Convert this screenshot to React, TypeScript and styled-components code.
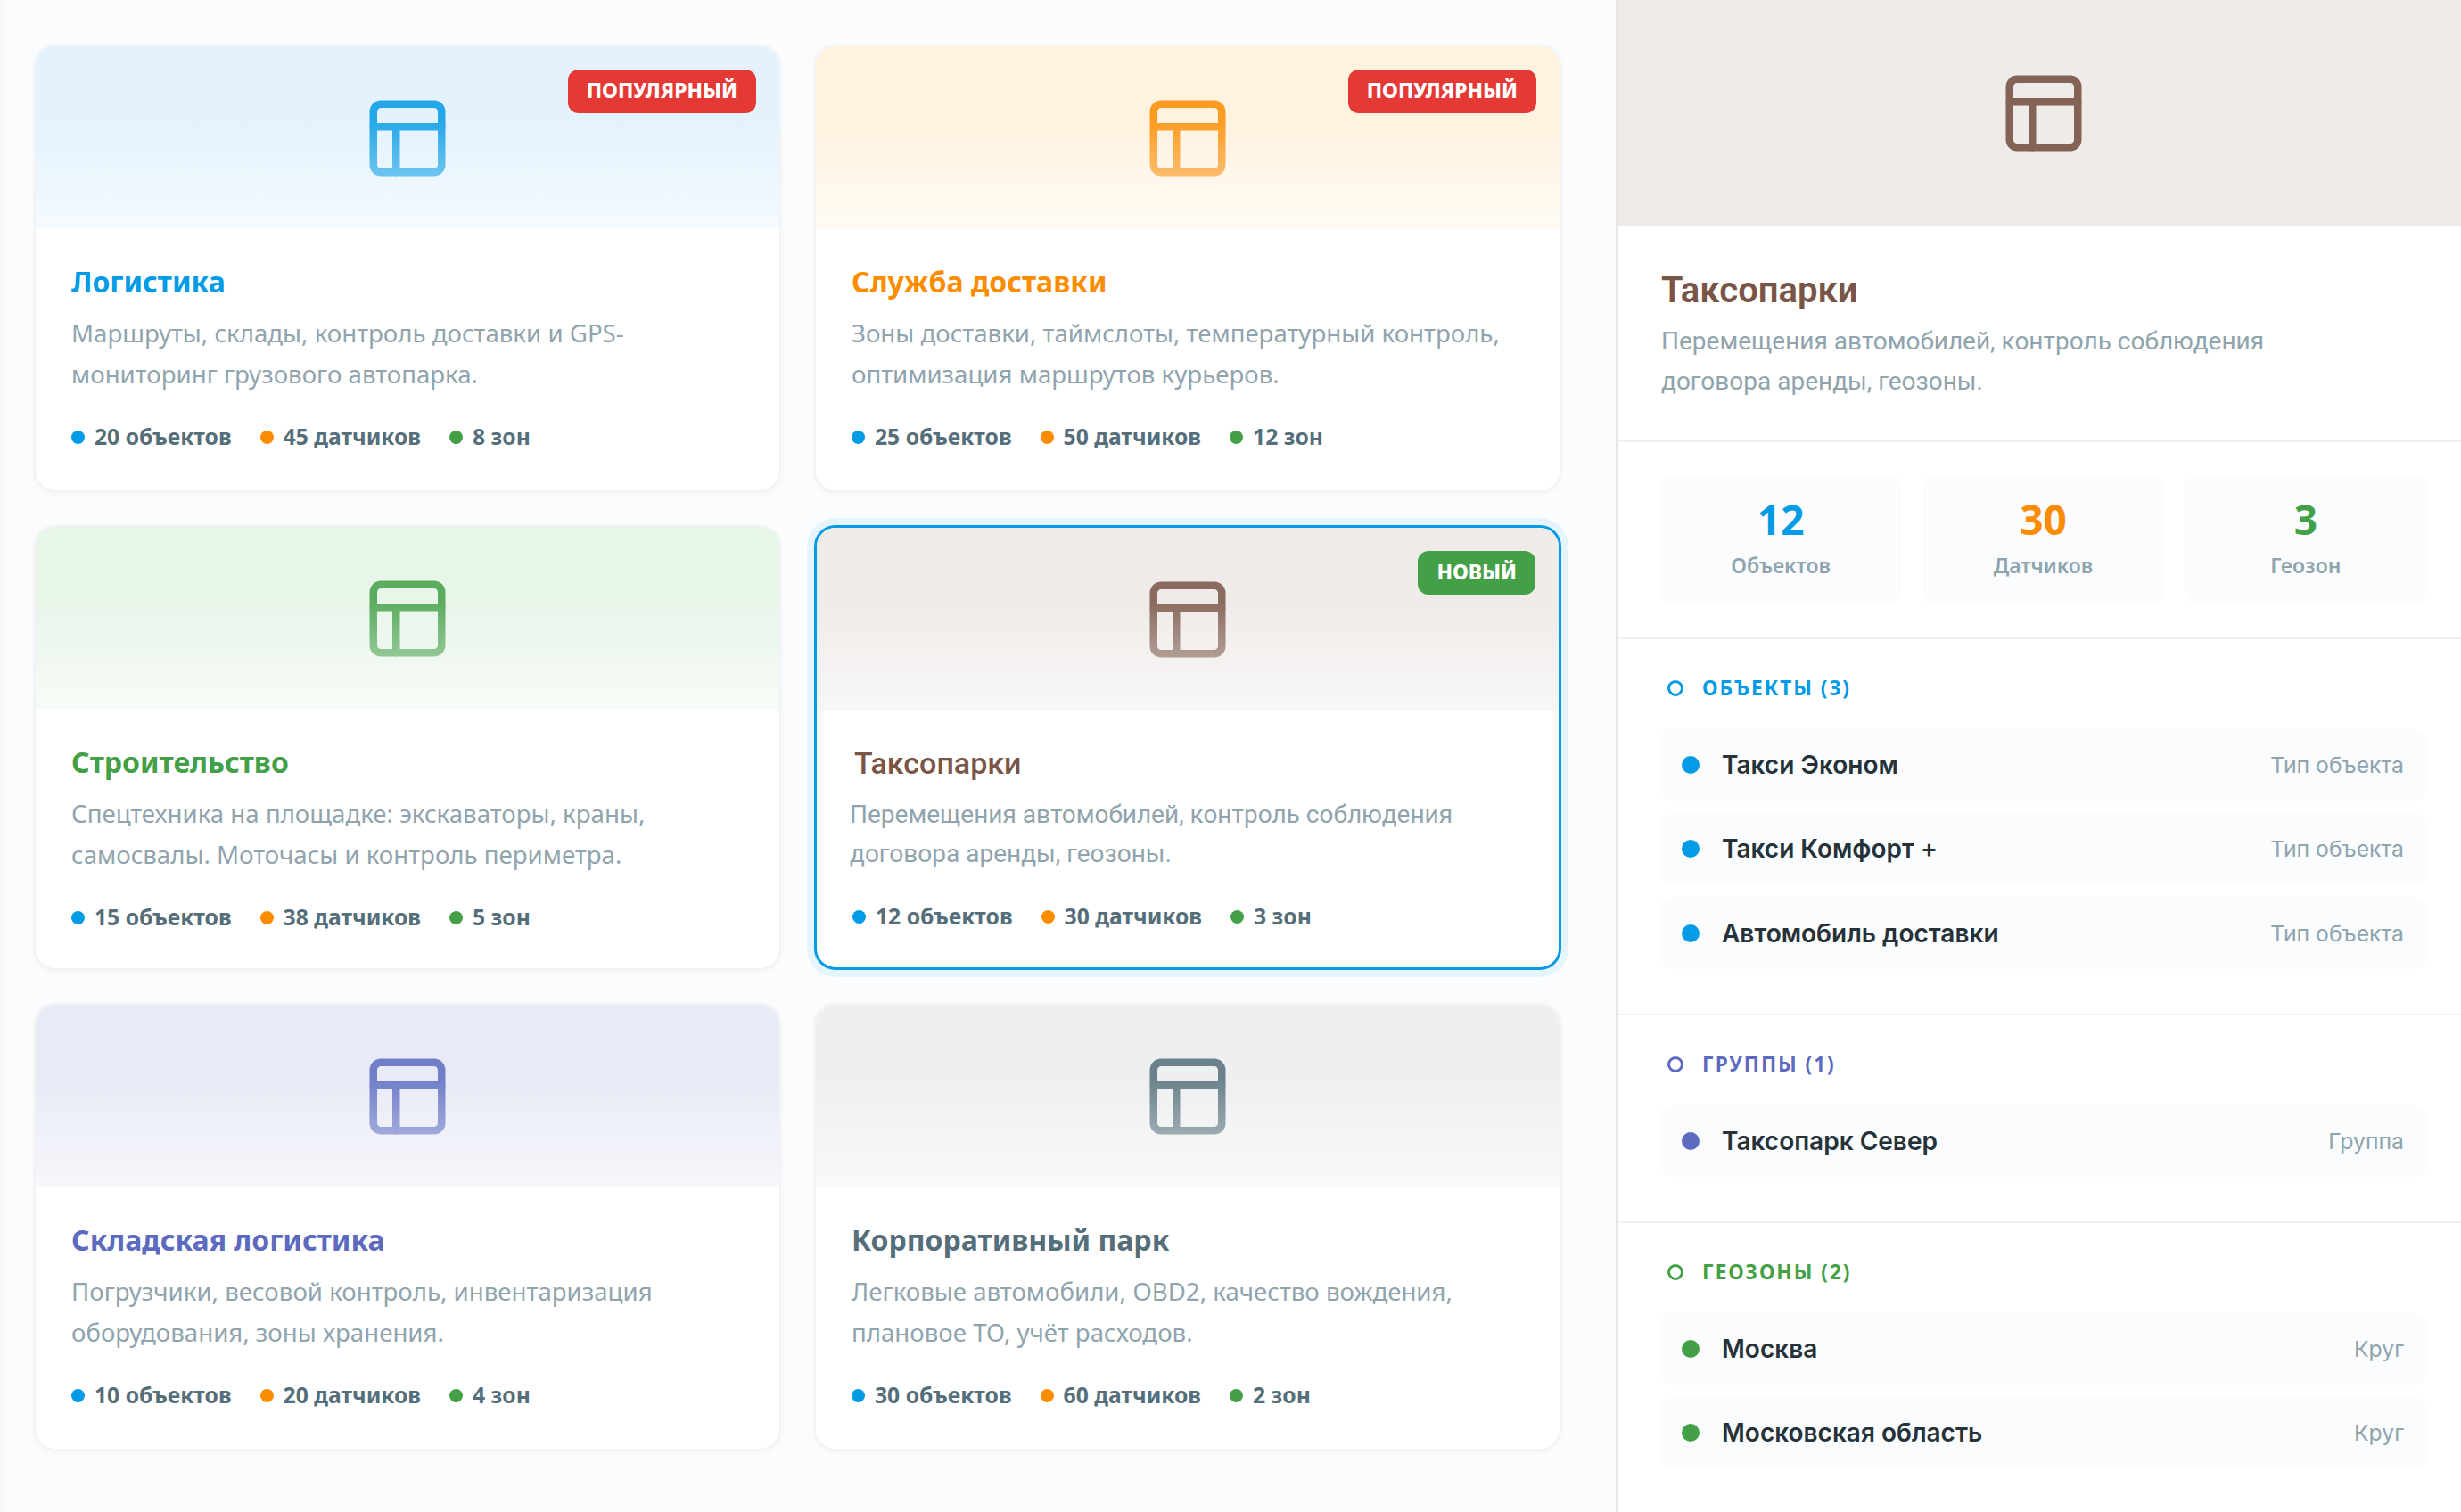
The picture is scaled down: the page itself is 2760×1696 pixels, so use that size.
import styled, { createGlobalStyle } from 'styled-components'
import { PanelsTopLeft } from 'lucide-react'

const BLUE = '#039be5'
const ORANGE = '#fb8c00'
const GREEN = '#43a047'
const INDIGO = '#5c6bc0'
const BROWN = '#795548'
const SLATE = '#546e7a'

const templates = [
  { title: 'Логистика', color: BLUE, tint: '#e3f2fd', desc: ['Маршруты, склады, контроль доставки и GPS-', 'мониторинг грузового автопарка.'], stats: ['20 объектов', '45 датчиков', '8 зон'], badge: 'Популярный' },
  { title: 'Служба доставки', color: ORANGE, tint: '#fff3e0', desc: ['Зоны доставки, таймслоты, температурный контроль,', 'оптимизация маршрутов курьеров.'], stats: ['25 объектов', '50 датчиков', '12 зон'], badge: 'Популярный' },
  { title: 'Строительство', color: GREEN, tint: '#e8f5e9', desc: ['Спецтехника на площадке: экскаваторы, краны,', 'самосвалы. Моточасы и контроль периметра.'], stats: ['15 объектов', '38 датчиков', '5 зон'] },
  { title: 'Таксопарки', color: BROWN, tint: '#efebe9', desc: ['Перемещения автомобилей, контроль соблюдения', 'договора аренды, геозоны.'], stats: ['12 объектов', '30 датчиков', '3 зон'], badge: 'Новый', selected: true },
  { title: 'Складская логистика', color: INDIGO, tint: '#e8eaf6', desc: ['Погрузчики, весовой контроль, инвентаризация', 'оборудования, зоны хранения.'], stats: ['10 объектов', '20 датчиков', '4 зон'] },
  { title: 'Корпоративный парк', color: SLATE, tint: '#eeeff0', desc: ['Легковые автомобили, OBD2, качество вождения,', 'плановое ТО, учёт расходов.'], stats: ['30 объектов', '60 датчиков', '2 зон'] },
]

const sections = [
  { label: 'Объекты (3)', color: BLUE, items: [['Такси Эконом', 'Тип объекта'], ['Такси Комфорт +', 'Тип объекта'], ['Автомобиль доставки', 'Тип объекта']] },
  { label: 'Группы (1)', color: INDIGO, items: [['Таксопарк Север', 'Группа']] },
  { label: 'Геозоны (2)', color: GREEN, items: [['Москва', 'Круг'], ['Московская область', 'Круг']] },
]

const statColors = [BLUE, ORANGE, GREEN]

const App = () => {
  return (
    <Page>
      <GlobalStyle />
      <Gallery>
        {templates.map((t) => (
          <Card key={t.title} $selected={!!t.selected}>
            <CardHead $tint={t.tint}>
              <PanelsTopLeft size={102} strokeWidth={2} color={t.color} />
              {t.badge && <Badge $bg={t.badge === 'Новый' ? GREEN : '#e53935'}>{t.badge}</Badge>}
            </CardHead>
            <CardBody>
              <CardTitle $color={t.color} $selected={!!t.selected}>{t.title}</CardTitle>
              <CardDesc $selected={!!t.selected}>
                {t.desc[0]}
                <br />
                {t.desc[1]}
              </CardDesc>
              <Meta>
                {t.stats.map((s, i) => (
                  <MetaItem key={s} $color={statColors[i]}>{s}</MetaItem>
                ))}
              </Meta>
            </CardBody>
          </Card>
        ))}
      </Gallery>
      <Panel>
        <PanelHead>
          <PanelsTopLeft size={102} strokeWidth={2} color={BROWN} />
        </PanelHead>
        <PanelIntro>
          <PanelTitle>Таксопарки</PanelTitle>
          <PanelDesc>
            Перемещения автомобилей, контроль соблюдения
            <br />
            договора аренды, геозоны.
          </PanelDesc>
        </PanelIntro>
        <Stats>
          <Stat>
            <StatValue $color={BLUE}>12</StatValue>
            <StatLabel>Объектов</StatLabel>
          </Stat>
          <Stat>
            <StatValue $color={ORANGE}>30</StatValue>
            <StatLabel>Датчиков</StatLabel>
          </Stat>
          <Stat>
            <StatValue $color={GREEN}>3</StatValue>
            <StatLabel>Геозон</StatLabel>
          </Stat>
        </Stats>
        {sections.map((s) => (
          <Section key={s.label}>
            <SectionHead $color={s.color}>{s.label}</SectionHead>
            <Rows>
              {s.items.map(([name, type]) => (
                <Row key={name}>
                  <RowDot $color={s.color} />
                  <RowName>{name}</RowName>
                  <RowType>{type}</RowType>
                </Row>
              ))}
            </Rows>
          </Section>
        ))}
      </Panel>
    </Page>
  )
}

export default App

const GlobalStyle = createGlobalStyle`
  html, body {
    margin: 0;
    padding: 0;
    background: #fafcfe;
    overflow: hidden;
  }
  * {
    box-sizing: border-box;
  }
`

const Page = styled.div`
  display: grid;
  grid-template-columns: 1812px 948px;
  height: 1696px;
  font-family: 'Noto Sans', sans-serif;
`

const Gallery = styled.main`
  display: grid;
  grid-template-columns: 838px 838px;
  grid-template-rows: 502px 499px 502px;
  column-gap: 37px;
  row-gap: 37px;
  align-content: start;
  padding: 50px 0 0 38px;
  background: linear-gradient(to right, #f5f7f9, #fafcfe 12px);
`

const Card = styled.article<{ $selected: boolean }>`
  display: flex;
  flex-direction: column;
  background: #fff;
  border: ${({ $selected }) => ($selected ? `3px solid ${BLUE}` : '2px solid #f1f3f5')};
  border-radius: 24px;
  overflow: hidden;
  box-shadow: ${({ $selected }) =>
    $selected ? '0 0 0 8px rgba(3, 155, 229, 0.08)' : '0 2px 6px rgba(0, 0, 0, 0.04)'};
`

const CardHead = styled.div<{ $tint: string }>`
  position: relative;
  height: 205px;
  flex: none;
  display: flex;
  align-items: center;
  justify-content: center;
  background: ${({ $tint }) => $tint};

  svg {
    opacity: 0.85;
  }

  &::after {
    content: '';
    position: absolute;
    left: 0;
    right: 0;
    bottom: 0;
    height: 60%;
    background: linear-gradient(to bottom, rgba(255, 255, 255, 0), rgba(255, 255, 255, 0.65));
  }
`

const Badge = styled.span<{ $bg: string }>`
  position: absolute;
  top: 26px;
  right: 26px;
  z-index: 1;
  height: 49px;
  padding: 0 21px 3px;
  display: flex;
  align-items: center;
  border-radius: 12px;
  background: ${({ $bg }) => $bg};
  color: #fff;
  font-size: 22.8px;
  font-weight: 800;
  text-transform: uppercase;
`

const CardBody = styled.div`
  padding: 36px 40px 0;
`

const CardTitle = styled.h3<{ $color: string; $selected: boolean }>`
  margin: 0 0 0 ${({ $selected }) => ($selected ? '2px' : '0')};
  color: ${({ $color }) => $color};
  font-family: ${({ $selected }) => ($selected ? 'Roboto' : "'Noto Sans'")}, sans-serif;
  font-size: ${({ $selected }) => ($selected ? '34px' : '32px')};
  font-weight: ${({ $selected }) => ($selected ? 500 : 700)};
  line-height: 46px;
`

const CardDesc = styled.p<{ $selected: boolean }>`
  margin: ${({ $selected }) => ($selected ? '13px 0 2px -3px' : '11px 0 0')};
  color: #90a4ae;
  font-family: ${({ $selected }) => ($selected ? 'Roboto' : "'Noto Sans'")}, sans-serif;
  font-size: ${({ $selected }) => ($selected ? '28px' : '27.65px')};
  line-height: ${({ $selected }) => ($selected ? '44px' : '46px')};
  white-space: nowrap;
`

const Meta = styled.div`
  display: flex;
  gap: 32px;
  margin-top: 30px;
`

const MetaItem = styled.span<{ $color: string }>`
  display: flex;
  align-items: center;
  gap: 11px;
  color: ${SLATE};
  font-size: 24.7px;
  font-weight: 700;
  line-height: 36px;

  &::before {
    content: '';
    width: 15px;
    height: 15px;
    border-radius: 50%;
    background: ${({ $color }) => $color};
  }
`

const Panel = styled.aside`
  background: #fff;
  border-left: 3px solid #e4e6e8;
  overflow: hidden;
`

const PanelHead = styled.div`
  height: 254px;
  display: flex;
  align-items: center;
  justify-content: center;
  padding-left: 8px;
  background: #efebe9;

  svg {
    opacity: 0.9;
  }
`

const PanelIntro = styled.div`
  height: 242px;
  padding: 48px 38px 0 48px;
  border-bottom: 2px solid #eef0f2;
`

const PanelTitle = styled.h2`
  margin: 0;
  color: ${BROWN};
  font-family: Roboto, sans-serif;
  font-size: 40px;
  font-weight: 600;
  line-height: 48px;
`

const PanelDesc = styled.p`
  margin: 10px 0 0;
  color: #90a4ae;
  font-family: Roboto, sans-serif;
  font-size: 28px;
  line-height: 45px;
`

const Stats = styled.div`
  display: grid;
  grid-template-columns: repeat(3, 1fr);
  gap: 22px;
  height: 221px;
  padding: 36px 38px 37px 46px;
  border-bottom: 2px solid #eef0f2;
`

const Stat = styled.div`
  display: flex;
  flex-direction: column;
  align-items: center;
  justify-content: center;
  padding-bottom: 7px;
  border-radius: 16px;
  background: #fafcfe;
`

const StatValue = styled.div<{ $color: string }>`
  color: ${({ $color }) => $color};
  font-size: 46px;
  font-weight: 700;
  line-height: 56px;
`

const StatLabel = styled.div`
  margin-top: 8px;
  color: #90a4ae;
  font-size: 23px;
  font-weight: 600;
  line-height: 32px;
`

const Section = styled.section`
  padding: 36px 38px 50px 46px;
  border-bottom: 2px solid #eef0f2;
`

const SectionHead = styled.h4<{ $color: string }>`
  display: flex;
  align-items: center;
  gap: 21px;
  margin: 0 0 26px 9px;
  color: ${({ $color }) => $color};
  font-size: 22.5px;
  font-weight: 700;
  line-height: 38px;
  letter-spacing: 2px;
  text-transform: uppercase;

  &::before {
    content: '';
    flex: none;
    width: 12px;
    height: 12px;
    border: 3px solid ${({ $color }) => $color};
    border-radius: 50%;
  }
`

const Rows = styled.div`
  display: flex;
  flex-direction: column;
  gap: 13.5px;
`

const Row = styled.div`
  display: flex;
  align-items: center;
  height: 81px;
  padding: 0 26px 0 25px;
  border-radius: 16px;
  background: #fafcfe;
`

const RowDot = styled.span<{ $color: string }>`
  flex: none;
  width: 20px;
  height: 20px;
  margin-right: 25px;
  border-radius: 50%;
  background: ${({ $color }) => $color};
`

const RowName = styled.span`
  flex: 1;
  color: #263238;
  font-family: Inter, sans-serif;
  font-size: 28px;
  font-weight: 600;
`

const RowType = styled.span`
  color: #90a4ae;
  font-family: Inter, sans-serif;
  font-size: 24.8px;
`
